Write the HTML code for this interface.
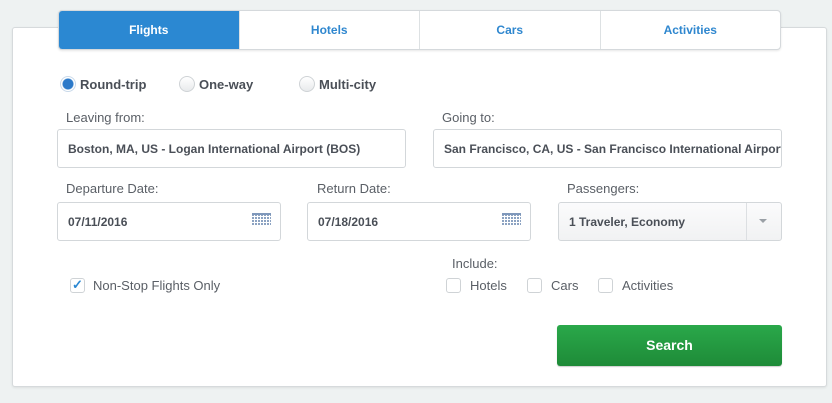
<!DOCTYPE html>
<html><head><meta charset="utf-8"><style>
*{box-sizing:border-box;margin:0;padding:0}
body{width:832px;height:403px;background:#eef2f2;font-family:"Liberation Sans",Arial,sans-serif;position:relative;overflow:hidden;color:#4a4f57}
.a{position:absolute}
.panel{left:12px;top:27px;width:815px;height:360px;background:#fff;border:1px solid #d6dadc;border-radius:3px;box-shadow:0 1px 2px rgba(0,0,0,.08)}
.tabs{left:58px;top:10px;width:723px;height:40px;display:flex;border:1px solid #d5d9dc;border-radius:4px;overflow:hidden;background:#fff;box-shadow:0 1px 2px rgba(0,0,0,.1)}
.tabs div{flex:1;text-align:center;line-height:39px;font-size:12px;font-weight:bold;color:#2f87cf;border-left:1px solid #dde1e3}
.tabs div:first-child{background:#2b88d2;color:#fff;border-left:none}
.radio{width:16px;height:16px;border-radius:50%;border:1px solid #cfd3d6;background:linear-gradient(#fff,#e8eaec)}
.rl{font-size:13px;font-weight:bold;color:#4a4f57}
.lbl{font-size:13px;color:#5a5f66}
.inp{border:1px solid #d3d7da;border-radius:3px;background:#fff;height:39px;font-size:12px;font-weight:bold;color:#4a4f57;line-height:38px;padding-left:10px;white-space:nowrap;overflow:hidden}
.cal{width:19px;height:13px;background:repeating-linear-gradient(90deg,#8ca3c2 0 2px,transparent 2px 3px),#fff;border-top:2px solid #7f98bb}
.cal:after{content:"";position:absolute;left:0;top:0;right:0;bottom:0;background:repeating-linear-gradient(0deg,#fff 0 1px,transparent 1px 3px)}
.cb{width:15px;height:15px;border:1px solid #cfd3d6;border-radius:3px;background:#fff}
</style></head><body>
<div class="a panel"></div>
<div class="a tabs"><div>Flights</div><div>Hotels</div><div>Cars</div><div>Activities</div></div>

<div class="a radio" style="left:60px;top:76px;border-color:#c9d9ea;background:radial-gradient(circle,#2b79c9 0 5px,#fff 6px)"></div>
<div class="a rl" style="left:80px;top:77px">Round-trip</div>
<div class="a radio" style="left:179px;top:76px"></div>
<div class="a rl" style="left:199px;top:77px">One-way</div>
<div class="a radio" style="left:299px;top:76px"></div>
<div class="a rl" style="left:319px;top:77px">Multi-city</div>

<div class="a lbl" style="left:66px;top:110px">Leaving from:</div>
<div class="a lbl" style="left:442px;top:110px">Going to:</div>
<div class="a inp" style="left:57px;top:129px;width:349px">Boston, MA, US - Logan International Airport (BOS)</div>
<div class="a inp" style="left:433px;top:129px;width:349px">San Francisco, CA, US - San Francisco International Airport (SFO)</div>

<div class="a lbl" style="left:66px;top:181px">Departure Date:</div>
<div class="a lbl" style="left:317px;top:181px">Return Date:</div>
<div class="a lbl" style="left:567px;top:181px">Passengers:</div>
<div class="a inp" style="left:57px;top:202px;width:224px">07/11/2016</div>
<div class="a cal" style="left:252px;top:213px"></div>
<div class="a inp" style="left:307px;top:202px;width:224px">07/18/2016</div>
<div class="a cal" style="left:502px;top:213px"></div>
<div class="a inp" style="left:558px;top:202px;width:224px;background:linear-gradient(#fbfbfc,#f1f2f3)">1 Traveler, Economy</div>
<div class="a" style="left:746px;top:203px;width:1px;height:37px;background:#dcdfe2"></div>
<div class="a" style="left:759px;top:219px;width:0;height:0;border-left:4px solid transparent;border-right:4px solid transparent;border-top:4px solid #9aa0a6"></div>

<div class="a cb" style="left:70px;top:278px"></div>
<div class="a" style="left:72px;top:277px;font-size:13px;color:#2b88d2;font-weight:bold">✓</div>
<div class="a lbl" style="left:93px;top:278px">Non-Stop Flights Only</div>
<div class="a lbl" style="left:452px;top:256px">Include:</div>
<div class="a cb" style="left:446px;top:278px"></div>
<div class="a lbl" style="left:470px;top:278px">Hotels</div>
<div class="a cb" style="left:527px;top:278px"></div>
<div class="a lbl" style="left:551px;top:278px">Cars</div>
<div class="a cb" style="left:598px;top:278px"></div>
<div class="a lbl" style="left:622px;top:278px">Activities</div>

<div class="a" style="left:557px;top:325px;width:225px;height:41px;border-radius:3px;background:linear-gradient(#2aa84a,#1e8b38);color:#fff;font-weight:bold;font-size:14px;text-align:center;line-height:41px;box-shadow:0 1px 1px rgba(0,0,0,.2)">Search</div>
</body></html>
